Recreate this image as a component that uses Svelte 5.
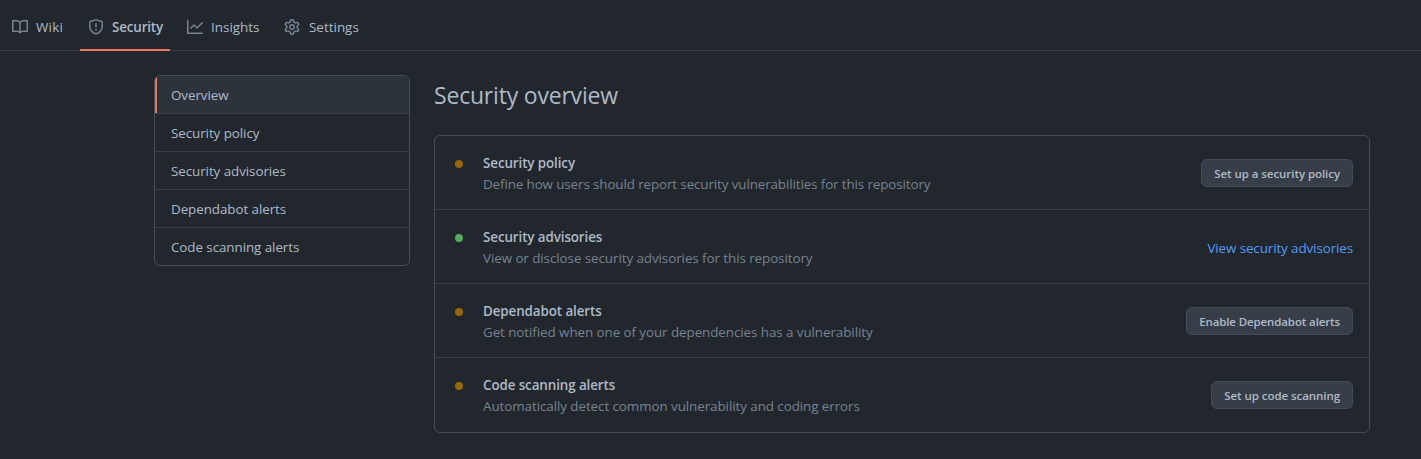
<script>
  const tabs = [
    { id: 'wiki', label: 'Wiki', icon: 'M0 1.75A.75.75 0 01.75 1h4.253c1.227 0 2.317.59 3 1.501A3.744 3.744 0 0111.006 1h4.245a.75.75 0 01.75.75v10.5a.75.75 0 01-.75.75h-4.507a2.25 2.25 0 00-1.591.659l-.622.621a.75.75 0 01-1.06 0l-.622-.621A2.25 2.25 0 005.258 13H.75a.75.75 0 01-.75-.75V1.75zm8.755 3a2.25 2.25 0 012.25-2.25H14.5v9h-3.757c-.71 0-1.4.201-1.992.572l.004-7.322zm-1.504 7.324l.004-5.073-.002-2.253A2.25 2.25 0 005.003 2.5H1.5v9h3.757a3.75 3.75 0 011.994.574z' },
    { id: 'security', label: 'Security', icon: 'M7.467.133a1.75 1.75 0 011.066 0l5.25 1.68A1.75 1.75 0 0115 3.48V7c0 1.566-.32 3.182-1.303 4.682-.983 1.498-2.585 2.813-5.032 3.855a1.7 1.7 0 01-1.33 0c-2.447-1.042-4.049-2.357-5.032-3.855C1.32 10.182 1 8.566 1 7V3.48a1.75 1.75 0 011.217-1.667l5.25-1.68zm.61 1.429a.25.25 0 00-.153 0l-5.25 1.68a.25.25 0 00-.174.238V7c0 1.358.275 2.666 1.057 3.86.784 1.194 2.121 2.34 4.366 3.297a.2.2 0 00.154 0c2.245-.956 3.582-2.104 4.366-3.298C13.225 9.666 13.5 8.36 13.5 7V3.48a.25.25 0 00-.174-.237l-5.25-1.68zM9 10.5a1 1 0 11-2 0 1 1 0 012 0zm-.25-5.75a.75.75 0 10-1.5 0v3a.75.75 0 001.5 0v-3z' },
    { id: 'insights', label: 'Insights', icon: 'M1.5 1.75a.75.75 0 00-1.5 0v12.5c0 .414.336.75.75.75h14.5a.75.75 0 000-1.5H1.5V1.75zm14.28 2.53a.75.75 0 00-1.06-1.06L10 7.94 7.53 5.47a.75.75 0 00-1.06 0L3.22 8.72a.75.75 0 001.06 1.06L7 7.06l2.47 2.47a.75.75 0 001.06 0l5.25-5.25z' },
    { id: 'settings', label: 'Settings', icon: 'M7.429 1.525a6.593 6.593 0 011.142 0c.036.003.108.036.137.146l.289 1.105c.147.56.55.967.997 1.189.174.086.341.183.501.29.417.278.97.423 1.53.27l1.102-.303c.11-.03.175.016.195.046.219.31.41.641.573.989.014.031.022.11-.059.19l-.815.806c-.411.406-.562.957-.53 1.456a4.588 4.588 0 010 .582c-.032.499.119 1.05.53 1.456l.815.806c.08.08.073.159.059.19a6.494 6.494 0 01-.573.99c-.02.029-.086.074-.195.045l-1.103-.303c-.559-.153-1.112-.008-1.529.27-.16.107-.327.204-.5.29-.449.222-.851.628-.998 1.189l-.289 1.105c-.029.11-.101.143-.137.146a6.613 6.613 0 01-1.142 0c-.036-.003-.108-.037-.137-.146l-.289-1.105c-.147-.56-.55-.967-.997-1.189a4.502 4.502 0 01-.501-.29c-.417-.278-.97-.423-1.53-.27l-1.102.303c-.11.03-.175-.016-.195-.046a6.492 6.492 0 01-.573-.989c-.014-.031-.022-.11.059-.19l.815-.806c.411-.406.562-.957.53-1.456a4.587 4.587 0 010-.582c.032-.499-.119-1.05-.53-1.456l-.815-.806c-.08-.08-.073-.159-.059-.19a6.44 6.44 0 01.573-.99c.02-.029.086-.075.195-.045l1.103.303c.559.153 1.112.008 1.529-.27.16-.107.327-.204.5-.29.449-.222.851-.628.998-1.189l.289-1.105c.029-.11.101-.143.137-.146zM8 0c-.236 0-.47.01-.701.03-.743.065-1.29.615-1.458 1.261l-.29 1.106c-.017.066-.078.158-.211.224a5.994 5.994 0 00-.668.386c-.123.082-.233.09-.3.071L3.27 2.776c-.644-.177-1.392.02-1.82.63a7.977 7.977 0 00-.704 1.217c-.315.675-.111 1.422.363 1.891l.815.806c.05.048.098.147.088.294a6.084 6.084 0 000 .772c.01.147-.038.246-.088.294l-.815.806c-.474.469-.678 1.216-.363 1.891.2.428.436.835.704 1.218.428.609 1.176.806 1.82.63l1.103-.303c.066-.019.176-.011.299.071.213.143.436.272.668.386.133.066.194.158.212.224l.289 1.106c.169.646.715 1.196 1.458 1.26a8.094 8.094 0 001.402 0c.743-.064 1.29-.614 1.458-1.26l.29-1.106c.017-.066.078-.158.211-.224a5.98 5.98 0 00.668-.386c.123-.082.233-.09.3-.071l1.102.302c.644.177 1.392-.02 1.82-.63.268-.382.505-.789.704-1.217.315-.675.111-1.422-.364-1.891l-.814-.806c-.05-.048-.098-.147-.088-.294a6.1 6.1 0 000-.772c-.01-.147.039-.246.088-.294l.814-.806c.475-.469.679-1.216.364-1.891a7.992 7.992 0 00-.704-1.218c-.428-.609-1.176-.806-1.82-.63l-1.103.303c-.066.019-.176.011-.299-.071a5.991 5.991 0 00-.668-.386c-.133-.066-.194-.158-.212-.224L10.16 1.29C9.99.645 9.444.095 8.701.031A8.094 8.094 0 008 0zm1.5 8a1.5 1.5 0 11-3 0 1.5 1.5 0 013 0zM11 8a3 3 0 11-6 0 3 3 0 016 0z' }
  ];
  const menu = ['Overview', 'Security policy', 'Security advisories', 'Dependabot alerts', 'Code scanning alerts'];
  const rows = [
    { id: 'policy', title: 'Security policy', text: 'Define how users should report security vulnerabilities for this repository', action: 'Set up a security policy' },
    { id: 'advisories', title: 'Security advisories', text: 'View or disclose security advisories for this repository', action: 'View security advisories', enabled: true },
    { id: 'dependabot', title: 'Dependabot alerts', text: 'Get notified when one of your dependencies has a vulnerability', action: 'Enable Dependabot alerts' },
    { id: 'scanning', title: 'Code scanning alerts', text: 'Automatically detect common vulnerability and coding errors', action: 'Set up code scanning' }
  ];
</script>

<div class="page">
  <nav class="tabs">
    {#each tabs as tab}
      <div class="tab {tab.id}" class:selected={tab.id === 'security'}>
        <svg width="16" height="16" viewBox="0 0 16 16" fill-rule="evenodd"><path d={tab.icon} /></svg>
        <span>{tab.label}</span>
      </div>
    {/each}
  </nav>
  <div class="layout">
    <aside class="menu">
      {#each menu as item, i}
        <div class="item" class:current={i === 0}>{item}</div>
      {/each}
    </aside>
    <main>
      <h2>Security overview</h2>
      <div class="box">
        {#each rows as row}
          <div class="row {row.id}">
            <i class="dot" class:on={row.enabled}></i>
            <div class="info">
              <div class="title">{row.title}</div>
              <div class="text">{row.text}</div>
            </div>
            {#if row.enabled}
              <span class="link">{row.action}</span>
            {:else}
              <button>{row.action}</button>
            {/if}
          </div>
        {/each}
      </div>
    </main>
  </div>
</div>

<style>
  :global(body) { background: #22272e; }
  .page {
    height: 459px;
    box-sizing: border-box;
    overflow: hidden;
    background: #22272e;
    color: #adbac7;
    font: 13.4px/21px "Segoe UI", "Open Sans", "Noto Sans", sans-serif;
    letter-spacing: -0.07px;
    white-space: nowrap;
  }
  .tabs {
    display: flex;
    gap: 9px;
    height: 51px;
    box-sizing: border-box;
    padding-left: 4px;
    border-bottom: 1px solid #373e47;
  }
  .tab {
    display: flex;
    align-items: center;
    gap: 8px;
    height: 51px;
    box-sizing: border-box;
    padding: 5px 8px 0;
    border-bottom: 2px solid transparent;
    letter-spacing: 0.02px;
  }
  .tab svg { flex: none; fill: #768390; }
  .wiki { width: 67px; letter-spacing: 0.25px; }
  .security { width: 90px; }
  .insights { width: 88px; }
  .settings { gap: 9px; }
  .tab.selected { border-color: #ec775c; font-weight: 600; letter-spacing: -0.15px; }
  .layout {
    display: flex;
    gap: 24px;
    align-items: flex-start;
    padding: 24px 51px 0 154px;
  }
  .menu {
    width: 256px;
    box-sizing: border-box;
    border: 1px solid #444c56;
    border-radius: 6px;
    overflow: hidden;
  }
  .item {
    height: 38px;
    box-sizing: border-box;
    padding: 9px 16px 0;
    border-bottom: 1px solid #373e47;
  }
  .item:last-child { height: 37px; border-bottom: 0; }
  .current { background: #2d333b; box-shadow: inset 2px 0 #ec775c; }
  main { flex: 1; }
  h2 {
    margin: 0 0 20px;
    font-size: 23px;
    line-height: 40px;
    font-weight: 400;
    letter-spacing: -0.2px;
  }
  .box { border: 1px solid #444c56; border-radius: 6px; }
  .row {
    display: flex;
    align-items: center;
    height: 74px;
    box-sizing: border-box;
    padding: 2px 16px 0 20px;
    border-bottom: 1px solid #373e47;
  }
  .row:last-child { border-color: transparent; }
  .dot {
    width: 8px;
    height: 8px;
    margin: 0 20px 20px 0;
    border-radius: 50%;
    background: #966600;
  }
  .on { background: #57ab5a; }
  .info { flex: 1; }
  .title { font-weight: 600; letter-spacing: -0.1px; }
  .text { color: #768390; }
  .policy .text { letter-spacing: -0.11px; }
  .link { padding-top: 1px; color: #539bf5; letter-spacing: -0.1px; }
  button {
    height: 28px;
    margin-bottom: 1px;
    padding: 1px 12px 0;
    border: 1px solid #444c56;
    border-radius: 6px;
    background: #373e47;
    color: #adbac7;
    font: 600 11.5px/20px "Segoe UI", "Open Sans", "Noto Sans", sans-serif;
    letter-spacing: -0.06px;
  }
  .dependabot button { letter-spacing: -0.12px; }
  .scanning button { letter-spacing: -0.06px; }
</style>
